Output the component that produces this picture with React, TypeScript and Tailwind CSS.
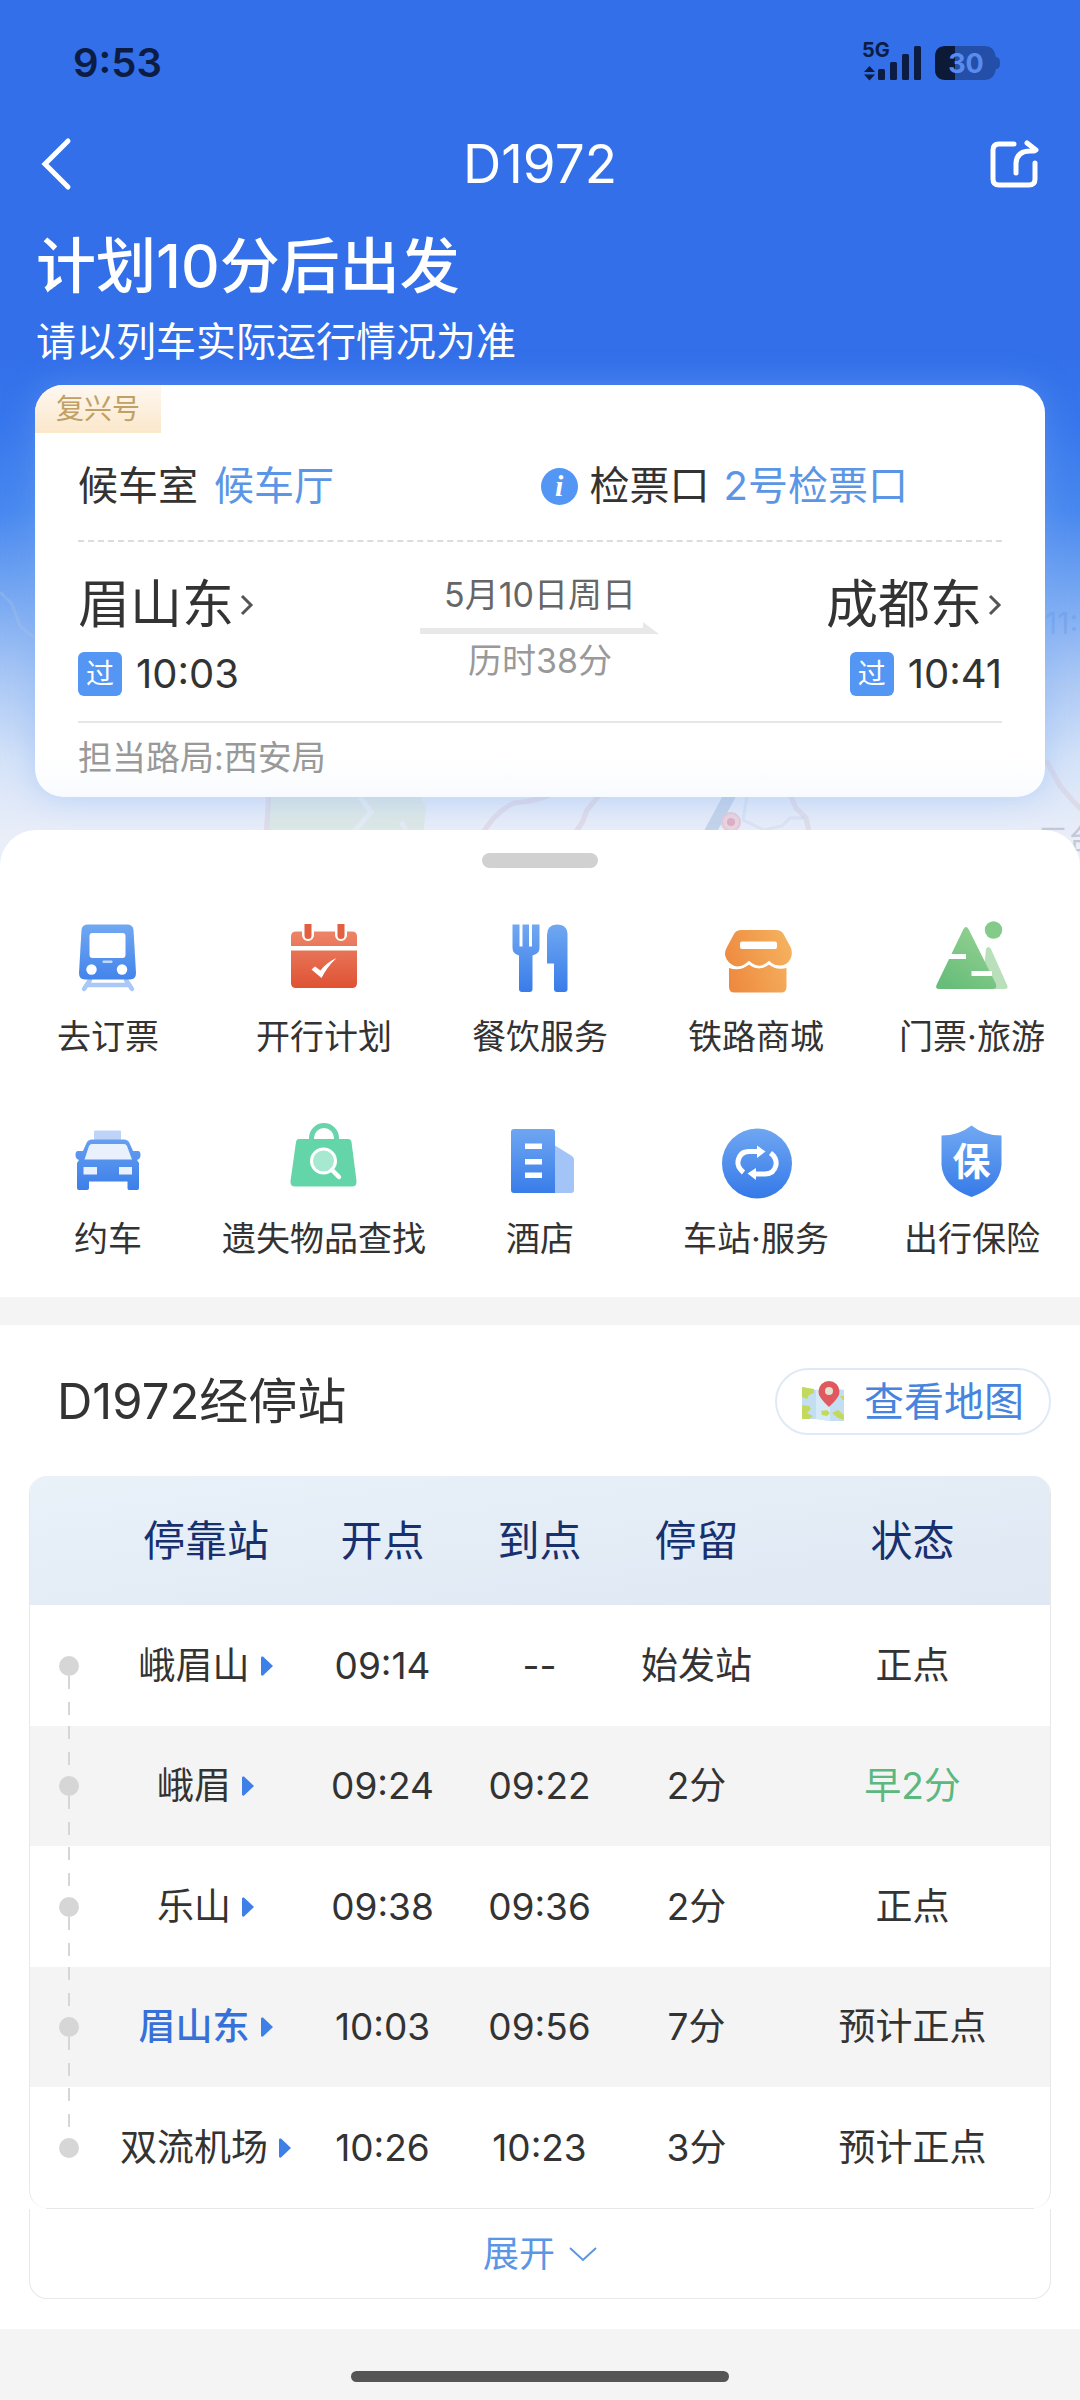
import React from 'react';

interface Stop {
  name: string;
  depart: string;
  arrive: string;
  stay: string;
  status: string;
  current?: boolean;
  early?: boolean;
}

interface Service {
  label: string;
  icon: React.ReactNode;
}

const stops: Stop[] = [
  { name: '峨眉山', depart: '09:14', arrive: '--', stay: '始发站', status: '正点' },
  { name: '峨眉', depart: '09:24', arrive: '09:22', stay: '2分', status: '早2分', early: true },
  { name: '乐山', depart: '09:38', arrive: '09:36', stay: '2分', status: '正点' },
  { name: '眉山东', depart: '10:03', arrive: '09:56', stay: '7分', status: '预计正点', current: true },
  { name: '双流机场', depart: '10:26', arrive: '10:23', stay: '3分', status: '预计正点' },
];

const services: Service[] = [
  {
    label: '去订票',
    icon: (
      <>
        <path d="M22 62 L16 71 M58 62 L64 71 M19 67 H61" fill="none" stroke="#a9c8f7" strokeWidth="4.5" strokeLinecap="round" />
        <path d="M20 6.5 H59 Q65 6.5 65.5 12 L68 55 Q68 61.5 62 61.5 H17 Q11 61.5 11 55 L13.5 12 Q14 6.5 20 6.5 Z" fill="url(#blue)" />
        <rect x="21.5" y="15" width="36" height="25" rx="3" fill="#fff" />
        <rect x="34.5" y="42.5" width="10" height="2.5" rx="1" fill="#c3d9fa" />
        <circle cx="23.5" cy="51.5" r="5.2" fill="#fff" />
        <circle cx="54" cy="51.5" r="5.2" fill="#fff" />
      </>
    ),
  },
  {
    label: '开行计划',
    icon: (
      <>
        <path d="M12 13.5 H68 Q73 13.5 73 18.5 V28 H7 V18.5 Q7 13.5 12 13.5 Z" fill="url(#red)" />
        <path d="M7 32.5 H73 V65 Q73 70 68 70 H12 Q7 70 7 65 Z" fill="url(#red)" />
        <path d="M24 6 V17 M57 6 V17" stroke="#fff" strokeWidth="12" strokeLinecap="round" />
        <path d="M20.5 6 H27.5 V17.5 A3.5 3.5 0 0 1 20.5 17.5 Z M53.5 6 H60.5 V17.5 A3.5 3.5 0 0 1 53.5 17.5 Z" fill="#e2603f" />
        <path d="M27.5 51.5 L31 48.5 L36.5 52.5 Q43 44 52.5 40 Q43 49 37.5 60 Z" fill="#fff" />
      </>
    ),
  },
  {
    label: '餐饮服务',
    icon: (
      <>
        <path
          d="M12.5 6.5 H19.5 V28.5 H22.5 V6.5 H29 V28.5 H32 V6.5 H39.5 V30 Q39.5 35.5 32.5 37.5 V71 Q32.5 74 29.5 74 H22 Q19 74 19 71 V37.5 Q12.5 35.5 12.5 30 Z"
          fill="url(#blue)"
        />
        <path d="M47 17 Q47 6.5 57 6.5 Q67.5 6.5 67.5 17 V71 Q67.5 74 64.5 74 H57 Q54 74 54 71 V45.5 H47 Z" fill="url(#blue)" />
      </>
    ),
  },
  {
    label: '铁路商城',
    icon: (
      <>
        <path
          d="M26 12 H60 Q65 12 67.5 16 L75 30 Q78 40 70 46 Q62 50 53 44 Q44 53 33 44 Q24 53 15 46 Q6 39 10.5 30 L18 16 Q20 12 26 12 Z"
          fill="url(#orange)"
        />
        <path d="M13 49.5 Q24 52 33 46.5 Q43 54 53 46.5 Q60 51.5 70.5 49.5 V69 Q70.5 74.5 65 74.5 H18.5 Q13 74.5 13 69 Z" fill="url(#orange)" />
        <path d="M13 48.5 Q24 53 33 44.5 Q43 53.5 53 44.5 Q60 51.5 71 48.5" fill="none" stroke="#fff" strokeWidth="2.5" />
        <rect x="24" y="23.5" width="37" height="7.5" rx="2" fill="#fff" />
      </>
    ),
  },
  {
    label: '门票·旅游',
    icon: (
      <>
        <path d="M54 31 Q56.5 27 59 31 L75.5 68 Q76 71 73 71 H50 Z" fill="#b9e0bb" />
        <path d="M31.5 11 Q34 7 36.5 11 L64 66 Q65 71 61 71 H7 Q3 71 4.5 67 Z" fill="url(#green)" />
        <circle cx="61.5" cy="12" r="8.7" fill="#84ca89" />
        <path d="M15 36 H34 V41 H15 Z M39.5 53 H60 V58 H39.5 Z" fill="#fff" />
      </>
    ),
  },
  {
    label: '约车',
    icon: (
      <>
        <rect x="26" y="10.5" width="27" height="9.5" rx="1" fill="#bdd4f8" />
        <path
          d="M24 19.5 H56 Q60 19.5 61.5 23 L65 31 H70 Q72.5 31 72.5 35 Q72.5 39 69 40 L71 43 V68 Q71 70 69 70 H61 Q59.5 70 59.5 68 V61.5 H21 V68 Q21 70 19 70 H11 Q9 70 9 68 V43 L11 40 Q7.5 39 7.5 35 Q7.5 31 10 31 H15 L18.5 23 Q20 19.5 24 19.5 Z"
          fill="url(#blue)"
        />
        <path d="M24 24 H56 Q58 24 59 26 L64 39.5 H16.5 L21 26 Q22 24 24 24 Z M15.5 47 H29 V54.5 H15.5 Z M51 47 H64 V54.5 H51 Z" fill="#e9f1fd" />
      </>
    ),
  },
  {
    label: '遗失物品查找',
    icon: (
      <>
        <path d="M27.5 23 V18 A12.5 12.5 0 0 1 52.5 18 V23" fill="none" stroke="#69d3ab" strokeWidth="5" />
        <path d="M15 19 H64 Q67 19 67.5 22 L72.5 61 Q73 66.5 68 66.5 H11 Q6 66.5 6.5 61 L12 22 Q12.5 19 15 19 Z" fill="#64d4a9" />
        <circle cx="39.5" cy="41" r="12" fill="#a6e9d0" stroke="#fff" strokeWidth="3" />
        <path d="M48 50 L55 57" stroke="#fff" strokeWidth="4.5" strokeLinecap="round" />
      </>
    ),
  },
  {
    label: '酒店',
    icon: (
      <>
        <path d="M55 25.5 L72 36 Q74 37.5 74 39.5 V70 Q74 73 71 73 H55 Z" fill="#a3c4f7" />
        <path d="M14 9 H52 Q55 9 55 12 V73 H14 Q11 73 11 70 V12 Q11 9 14 9 Z" fill="url(#blue)" />
        <path d="M25 23.5 H42 V29 H25 Z M25 39 H42 V44.5 H25 Z M25 52.5 H42 V58 H25 Z" fill="#fff" />
      </>
    ),
  },
  {
    label: '车站·服务',
    icon: (
      <>
        <circle cx="41" cy="43.5" r="35" fill="url(#blue)" />
        <path d="M27.5 52.5 Q21 47 22 41 Q24 31.5 33 31.5 H43" fill="none" stroke="#fff" strokeWidth="5" />
        <path d="M41 25.5 L49.5 31.5 L41 38 Z" fill="#fff" />
        <path d="M54.5 33 Q61 38 60 45 Q58 54 49 54 H38" fill="none" stroke="#fff" strokeWidth="5" />
        <path d="M40 48 L31.5 53.5 L40 60 Z" fill="#fff" />
      </>
    ),
  },
  {
    label: '出行保险',
    icon: (
      <>
        <path d="M39.5 5.5 Q52 15.5 69.5 15.5 V45 Q68 67 39.5 77 Q11 67 9.5 45 V15.5 Q27 15.5 39.5 5.5 Z" fill="url(#blue)" />
        <text x="39.5" y="55" textAnchor="middle" fontSize="38" fontWeight="700" fill="#fff">
          保
        </text>
      </>
    ),
  },
];

// Shared gradients, referenced by id from the service icons
const IconGradients: React.FC = () => (
  <svg className="absolute h-0 w-0" aria-hidden="true">
    <defs>
      <linearGradient id="blue" gradientUnits="userSpaceOnUse" x1="0" y1="6" x2="0" y2="76">
        <stop offset="0" stopColor="#71a8f2" />
        <stop offset="1" stopColor="#377be9" />
      </linearGradient>
      <linearGradient id="red" gradientUnits="userSpaceOnUse" x1="0" y1="12" x2="0" y2="70">
        <stop offset="0" stopColor="#ed866a" />
        <stop offset="1" stopColor="#df5233" />
      </linearGradient>
      <linearGradient id="orange" gradientUnits="userSpaceOnUse" x1="10" y1="50" x2="76" y2="30">
        <stop offset="0" stopColor="#ee8a3f" />
        <stop offset="1" stopColor="#f5b25f" />
      </linearGradient>
      <linearGradient id="green" gradientUnits="userSpaceOnUse" x1="60" y1="10" x2="20" y2="71">
        <stop offset="0" stopColor="#97d294" />
        <stop offset="1" stopColor="#67bd79" />
      </linearGradient>
    </defs>
  </svg>
);

const MapBackdrop: React.FC = () => (
  <svg viewBox="0 0 1080 870" preserveAspectRatio="xMidYMin slice" className="absolute inset-0 h-full w-full" aria-hidden="true">
    <path d="M270 790 H415 L426 806 L424 828 L416 870 H268 Z" fill="#d5e5da" opacity="0.6" />
    <path d="M360 797 L371 812 L352 834 M401 822 L410 836" fill="none" stroke="#e3ebf4" strokeWidth="5" />
    <g fill="none" stroke="#d8cddb" strokeWidth="5" opacity="0.5">
      <path d="M269 790 L266 840" />
      <path d="M480 838 Q494 812 514 803 Q536 802 556 792" />
      <path d="M570 840 L582 823 L587 810 L602 792" />
      <path d="M788 790 L796 808 L806 818 L811 840" />
      <path d="M1046 760 L1060 786 L1072 800 L1084 812" />
    </g>
    <g fill="none" stroke="#b9c6e2" strokeWidth="3" opacity="0.25">
      <path d="M0 592 L12 604 L20 626 L40 642" />
      <path d="M1040 686 H1066 L1084 692" />
      <path d="M748 790 L743 820 L764 830 L782 826 L790 818 H804" />
    </g>
    <path d="M708 836 L730 795" stroke="#c3d3ea" strokeWidth="12" />
    <circle cx="731" cy="822" r="9" fill="#e9d3e0" stroke="#e3c8d8" strokeWidth="2" />
    <circle cx="731" cy="822" r="4" fill="#dfaec5" />
    <text x="1045" y="634" fontSize="30" fill="#4f86df" opacity="0.25">11:</text>
    <text x="1038" y="850" fontSize="30" fill="#8d93a8" opacity="0.4">三台</text>
  </svg>
);

const StatusBar: React.FC = () => (
  <div className="flex h-[126px] items-center justify-between pr-20 pl-[73px] text-[#0c1c42]">
    <span className="text-[40px] font-semibold">9:53</span>
    <svg viewBox="0 -7 140 60" className="h-[60px] w-[140px]" aria-label="5G, 电量 30%">
      <text x="2" y="17" fontSize="20" fontWeight="700" fill="#0c1c42">5G</text>
      <path d="M9.5 26 L15 32 H4 Z M4 34.5 H15 L9.5 40.5 Z" fill="#0c1c42" />
      <rect x="18" y="29" width="7" height="11" rx="1.5" fill="#0c1c42" />
      <rect x="30" y="22" width="7" height="18" rx="1.5" fill="#0c1c42" />
      <rect x="42" y="14" width="7" height="26" rx="1.5" fill="#0c1c42" />
      <rect x="54" y="6" width="7" height="34" rx="1.5" fill="#0c1c42" />
      <path d="M86 6 H125 Q134 6 136 17 Q140 17 140 23 Q140 29 136 29 Q134 40 125 40 H86 Q75 40 75 29 V17 Q75 6 86 6 Z" fill="#234fa8" />
      <path d="M86 6 H95 V40 H86 Q75 40 75 29 V17 Q75 6 86 6 Z" fill="#0c1a38" />
      <text x="106" y="33" textAnchor="middle" fontSize="27" fontWeight="700" fill="#5a8cf0">30</text>
    </svg>
  </div>
);

const NavBar: React.FC = () => (
  <div className="flex h-[76px] items-center justify-between px-10">
    <button type="button" aria-label="返回" className="flex w-14 items-center">
      <svg viewBox="0 0 34 54" className="h-[54px] w-[34px]" fill="none" stroke="#fff" strokeWidth="5" strokeLinecap="round">
        <path d="M28 4 L5 27 L28 50" />
      </svg>
    </button>
    <h1 className="text-[53px] leading-[64px]">D1972</h1>
    <button type="button" aria-label="分享" className="flex w-14 justify-end">
      <svg viewBox="0 0 52 52" className="h-[52px] w-[52px]" fill="none" stroke="#fff" strokeWidth="5" strokeLinecap="round" strokeLinejoin="round">
        <path d="M26 6 H11 Q5 6 5 12 V41 Q5 47 11 47 H41 Q47 47 47 41 V25" />
        <path d="M28 35 V25 Q29 13 42 13 H46 M39 5 L48 12" />
      </svg>
    </button>
  </div>
);

const SmallChevron: React.FC = () => (
  <svg viewBox="0 0 14 24" className="h-6 w-[14px]" fill="none" stroke="#555" strokeWidth="3">
    <path d="M2 3 L11 12 L2 21" />
  </svg>
);

const PassBadge: React.FC = () => (
  <span className="flex h-11 w-11 items-center justify-center rounded-md bg-[#5396f4] text-[28px] leading-none text-white">过</span>
);

const TripCard: React.FC = () => (
  <section className="relative mx-[35px] mt-[15px] overflow-hidden rounded-[28px] bg-white bg-linear-to-b from-white from-90% to-[#f8fbfe] shadow-[0_0_32px_rgba(120,170,245,0.4)]">
    <div className="flex h-12 w-[126px] items-center justify-center bg-linear-to-b from-[#fef8f1] to-[#fbe7ca] text-[28px] text-[#bfa065]">复兴号</div>
    <div className="px-[43px] text-[#333]">
      <div className="mt-[23px] flex justify-between border-b-2 border-dashed border-[#dcdcdc] pr-[94px] pb-6 text-[40px] leading-[60px]">
        <div className="flex gap-4">
          <span>候车室</span>
          <a href="#waiting" className="text-[#5b96e6]">候车厅</a>
        </div>
        <div className="flex items-center">
          <button type="button" aria-label="说明" className="flex h-[37px] w-[37px] items-center justify-center rounded-full bg-[#5396f4] font-['Liberation_Serif',serif] text-[30px] leading-none font-bold text-white italic">
            i
          </button>
          <span className="ml-3">检票口</span>
          <a href="#gate" className="ml-[14px] text-[#5b96e6]">2号检票口</a>
        </div>
      </div>

      <div className="grid grid-cols-[1fr_auto_1fr] border-b-2 border-[#e6e6e6] pt-[31px] pb-[22px]">
        <div>
          <button type="button" className="flex items-center gap-[6px] text-[52px] leading-[64px]">
            眉山东
            <SmallChevron />
          </button>
          <div className="mt-3 flex items-center gap-[14px] text-[40px] leading-[50px]">
            <PassBadge />
            10:03
          </div>
        </div>
        <div className="flex w-[240px] flex-col items-center text-[34px] leading-[44px]">
          <span className="text-[#666]">5月10日周日</span>
          <svg viewBox="0 0 240 12" className="my-[5px] h-3 w-[240px]">
            <path d="M0 6 H223 V0 L239 12 H0 Z" fill="#e8e8e8" />
          </svg>
          <span className="text-[#999]">历时38分</span>
        </div>
        <div className="flex flex-col items-end">
          <button type="button" className="flex items-center gap-[6px] text-[52px] leading-[64px]">
            成都东
            <SmallChevron />
          </button>
          <div className="mt-3 flex items-center gap-[14px] text-[40px] leading-[50px]">
            <PassBadge />
            10:41
          </div>
        </div>
      </div>
      <p className="pb-1 text-[34px] leading-[70px] text-[#999]">担当路局:西安局</p>
    </div>
  </section>
);

const ServiceGrid: React.FC = () => (
  <nav className="mt-[50px] grid grid-cols-5 gap-y-[61px] pb-9">
    {services.map(service => (
      <a key={service.label} href="#service" className="flex flex-col items-center gap-[17px]">
        <svg viewBox="0 0 80 80" className="h-20 w-20" aria-hidden="true">
          {service.icon}
        </svg>
        <span className="text-[34px] leading-[44px] whitespace-nowrap text-[#333]">{service.label}</span>
      </a>
    ))}
  </nav>
);

const MapPinIcon: React.FC = () => (
  <svg viewBox="0 0 46 46" className="h-[46px] w-[46px]" aria-hidden="true">
    <path d="M2 8 L16 11 L30 8 L44 11 V42 L30 42 L16 40 L2 40 Z" fill="#c3def3" />
    <path d="M16 11 L30 8 V42 L16 40 Z" fill="#d6e9f7" />
    <path d="M2 8 L14 10 V14 L9 16 L7 20 L2 18 Z M2 26 L9 27 L11 30 L7 34 L13 37 L9 40 H2 Z M21 32 L27 31 L30 34 L27 37 L22 36 Z M32 34 L38 31 L44 36 V41 L38 39 Z M40 17 H44 V22 Z" fill="#c3d95e" />
    <path d="M29 28 Q18 18 18.5 12.5 A10.5 10.5 0 0 1 39.5 12.5 Q40 18 29 28 Z" fill="#e0595f" />
    <circle cx="29" cy="12" r="4" fill="#e4e2cf" />
  </svg>
);

const StopTable: React.FC = () => {
  const lastIndex = stops.length - 1;

  return (
    <div className="overflow-hidden rounded-[18px] border-x border-[#e8e8e8]">
      <table className="w-full table-fixed text-center text-[#333]">
        <colgroup>
          <col className="w-[78px]" />
          <col className="w-[196px]" />
          <col className="w-[157px]" />
          <col className="w-[157px]" />
          <col className="w-[157px]" />
          <col />
        </colgroup>
        <thead>
          <tr className="h-[129px] bg-linear-to-br from-[#e9f1f9] to-[#dfe8f3] text-[42px] text-[#17306e]">
            <th />
            <th className="font-normal">停靠站</th>
            <th className="font-normal">开点</th>
            <th className="font-normal">到点</th>
            <th className="font-normal">停留</th>
            <th className="font-normal">状态</th>
          </tr>
        </thead>
        <tbody>
          {stops.map((stop, i) => (
            <tr key={stop.name} className="h-[121px] text-[37px] leading-[50px] even:h-[120px] even:bg-[#f4f4f4]">
              <td className="p-0">
                {/* Timeline: dashed halves above and below the dot */}
                <div className="flex h-[120px] flex-col items-center">
                  <span className={i === 0 ? 'w-[2px] flex-1' : 'w-[2px] flex-1 bg-[repeating-linear-gradient(to_bottom,#d6d6d6_0_13px,transparent_13px_26px)]'} />
                  <span className="h-5 w-5 rounded-full bg-[#d6d6d6]" />
                  <span className={i === lastIndex ? 'w-[2px] flex-1' : 'w-[2px] flex-1 bg-[repeating-linear-gradient(to_bottom,#d6d6d6_0_13px,transparent_13px_26px)]'} />
                </div>
              </td>
              <td className="p-0">
                <button type="button" className={`inline-flex items-center gap-[10px] whitespace-nowrap ${stop.current ? 'font-medium text-[#3670d8]' : ''}`}>
                  {stop.name}
                  <svg viewBox="0 0 14 20" className="h-5 w-[14px]">
                    <path d="M1 1.5 Q1 0 3 0.5 L13 10 L3 19.5 Q1 20 1 18.5 Z" fill="#3f80e8" />
                  </svg>
                </button>
              </td>
              <td className="p-0">{stop.depart}</td>
              <td className="p-0">{stop.arrive}</td>
              <td className="p-0">{stop.stay}</td>
              <td className={stop.early ? 'p-0 text-[#5cb87f]' : 'p-0'}>{stop.status}</td>
            </tr>
          ))}
        </tbody>
      </table>
    </div>
  );
};

export default function App() {
  return (
    <div className="min-h-screen bg-[#f4f4f4] font-[Inter,'Noto_Sans_CJK_SC',sans-serif]">
      <IconGradients />

      {/* Blue header fading into the map */}
      <header className="relative bg-[linear-gradient(to_bottom,#326fe9_350px,#3776ec_420px,#4888ef_510px,#7aaaf2_600px,#abc8f5_680px,#d5e3f8_760px,#eaeef8_840px)] pb-[73px] text-white">
        <MapBackdrop />
        <div className="relative">
          <StatusBar />
          <NavBar />
          <div className="mt-7 px-9">
            <h2 className="text-[60px] leading-[72px] font-medium">计划10分后出发</h2>
            <p className="mt-3 text-[40px] leading-[56px]">请以列车实际运行情况为准</p>
          </div>
          <TripCard />
        </div>
      </header>

      <main>
        <section className="relative -mt-10 rounded-t-[36px] bg-white pt-[23px]">
          <div className="mx-auto h-[15px] w-[116px] rounded-full bg-[#d1d1d1]" />
          <ServiceGrid />
        </section>

        <section className="mt-7 bg-white px-[29px] pt-[43px] pb-[30px]">
          <div className="mb-[41px] flex items-center justify-between pl-7">
            <h2 className="text-[49px] leading-[64px] text-[#333]">D1972经停站</h2>
            <button type="button" className="flex h-[67px] items-center gap-[18px] rounded-full border-2 border-[#dfeaf6] pr-[25px] pl-[23px] text-[40px] leading-none text-[#4684de]">
              <MapPinIcon />
              查看地图
            </button>
          </div>

          <StopTable />
          <div className="mx-[17px] border-t border-[#e8e8e8]" />
          <button type="button" className="flex h-[90px] w-full items-center justify-center gap-[14px] rounded-b-[18px] border-x border-b border-[#e8e8e8] text-[36px] text-[#5b96e6]">
            展开
            <svg viewBox="0 0 28 16" className="h-4 w-7" fill="none" stroke="#5b96e6" strokeWidth="2">
              <path d="M1 2 L14 14 L27 2" />
            </svg>
          </button>
        </section>
      </main>

      <footer className="flex h-[71px] items-end justify-center pb-[18px]">
        <div className="h-[11px] w-[378px] rounded-full bg-[#555]" />
      </footer>
    </div>
  );
}
